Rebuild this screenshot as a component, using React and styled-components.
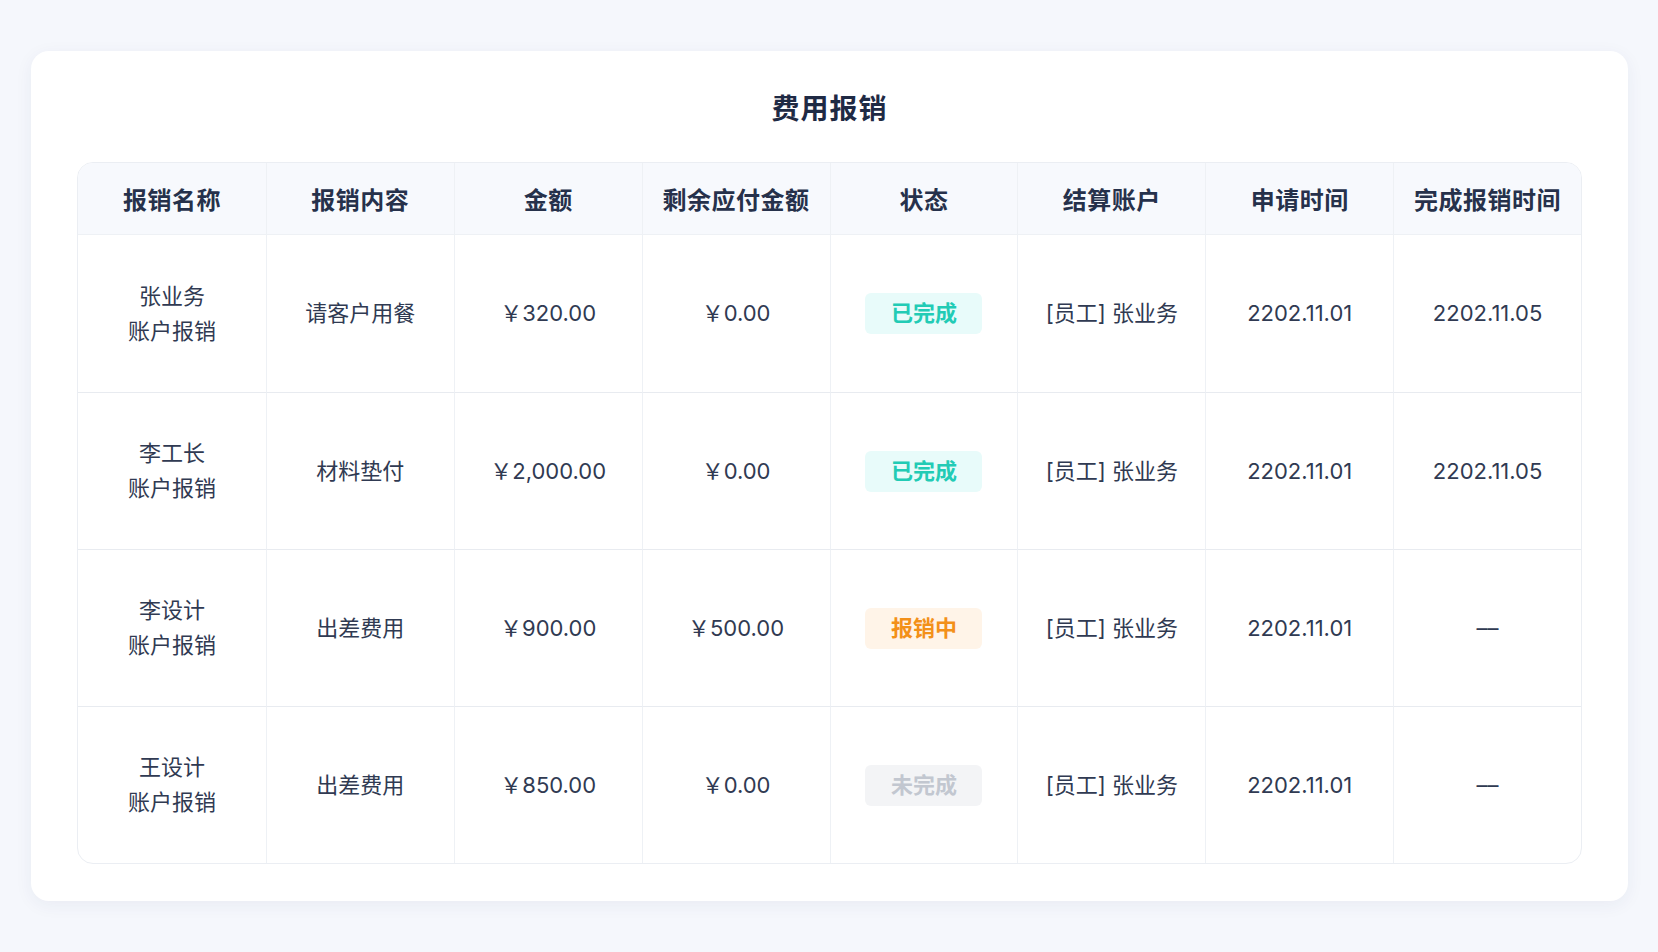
import React from "react";
import styled, { createGlobalStyle } from "styled-components";

const Global = createGlobalStyle`
  html, body { margin: 0; background: #f5f7fc; }
  body { font-family: Inter, "Noto Sans CJK SC", sans-serif; color: #2a3550; }
`;

const Page = styled.div`
  padding: 51px 30px 51px 31px;
`;
const Card = styled.div`
  background: #fff;
  border-radius: 18px;
  box-shadow: 0 4px 18px rgba(30, 50, 100, 0.06);
  padding: 0 46px 38px;
  height: 850px;
  box-sizing: border-box;
`;
const Title = styled.h1`
  margin: 0;
  height: 111px;
  display: flex;
  align-items: center;
  justify-content: center;
  font-size: 28px;
  font-weight: 700;
  color: #1f2a44;
  letter-spacing: 1px;
`;
const Table = styled.div`
  border: 1px solid #ebeef3;
  border-radius: 16px;
  overflow: hidden;
  display: grid;
  grid-template-columns: repeat(8, 1fr);
  grid-template-rows: 72px repeat(4, 157px);
`;
const Head = styled.div`
  background: #f7f9fd;
  display: flex;
  align-items: center;
  justify-content: center;
  font-size: 24px;
  font-weight: 600;
  letter-spacing: 0.5px;
  color: #26314b;
  border-left: ${(p) => (p.first ? "none" : "1px solid #eef1f5")};
  border-bottom: 1px solid #eef1f5;
`;
const Cell = styled.div`
  display: flex;
  align-items: center;
  justify-content: center;
  text-align: center;
  font-size: 22px;
  line-height: 35px;
  color: #303a52;
  border-left: ${(p) => (p.first ? "none" : "1px solid #eef1f5")};
  border-top: ${(p) => (p.top ? "none" : "1px solid #e8ebf0")};
`;
const tones = {
  done: ["#e8fbfa", "#22cbb5"],
  doing: ["#fff4e8", "#f39019"],
  none: ["#f3f4f6", "#c2c7d0"],
};
const Badge = styled.span`
  width: 117px;
  height: 41px;
  border-radius: 6px;
  display: flex;
  align-items: center;
  justify-content: center;
  font-weight: 700;
  font-size: 22px;
  background: ${(p) => tones[p.tone][0]};
  color: ${(p) => tones[p.tone][1]};
`;

const heads = ["报销名称", "报销内容", "金额", "剩余应付金额", "状态", "结算账户", "申请时间", "完成报销时间"];
const rows = [
  ["张业务", "请客户用餐", "￥320.00", "￥0.00", ["done", "已完成"], "2202.11.05"],
  ["李工长", "材料垫付", "￥2,000.00", "￥0.00", ["done", "已完成"], "2202.11.05"],
  ["李设计", "出差费用", "￥900.00", "￥500.00", ["doing", "报销中"], "––"],
  ["王设计", "出差费用", "￥850.00", "￥0.00", ["none", "未完成"], "––"],
];

export default function App() {
  return (
    <>
      <Global />
      <Page>
        <Card>
          <Title>费用报销</Title>
          <Table>
            {heads.map((h, i) => (
              <Head key={h} first={i === 0}>{h}</Head>
            ))}
            {rows.map((r, ri) => (
              <React.Fragment key={ri}>
                <Cell first top={ri === 0}>{r[0]}<br />账户报销</Cell>
                <Cell top={ri === 0}>{r[1]}</Cell>
                <Cell top={ri === 0}>{r[2]}</Cell>
                <Cell top={ri === 0}>{r[3]}</Cell>
                <Cell top={ri === 0}><Badge tone={r[4][0]}>{r[4][1]}</Badge></Cell>
                <Cell top={ri === 0}>[员工] 张业务</Cell>
                <Cell top={ri === 0}>2202.11.01</Cell>
                <Cell top={ri === 0}>{r[5]}</Cell>
              </React.Fragment>
            ))}
          </Table>
        </Card>
      </Page>
    </>
  );
}
